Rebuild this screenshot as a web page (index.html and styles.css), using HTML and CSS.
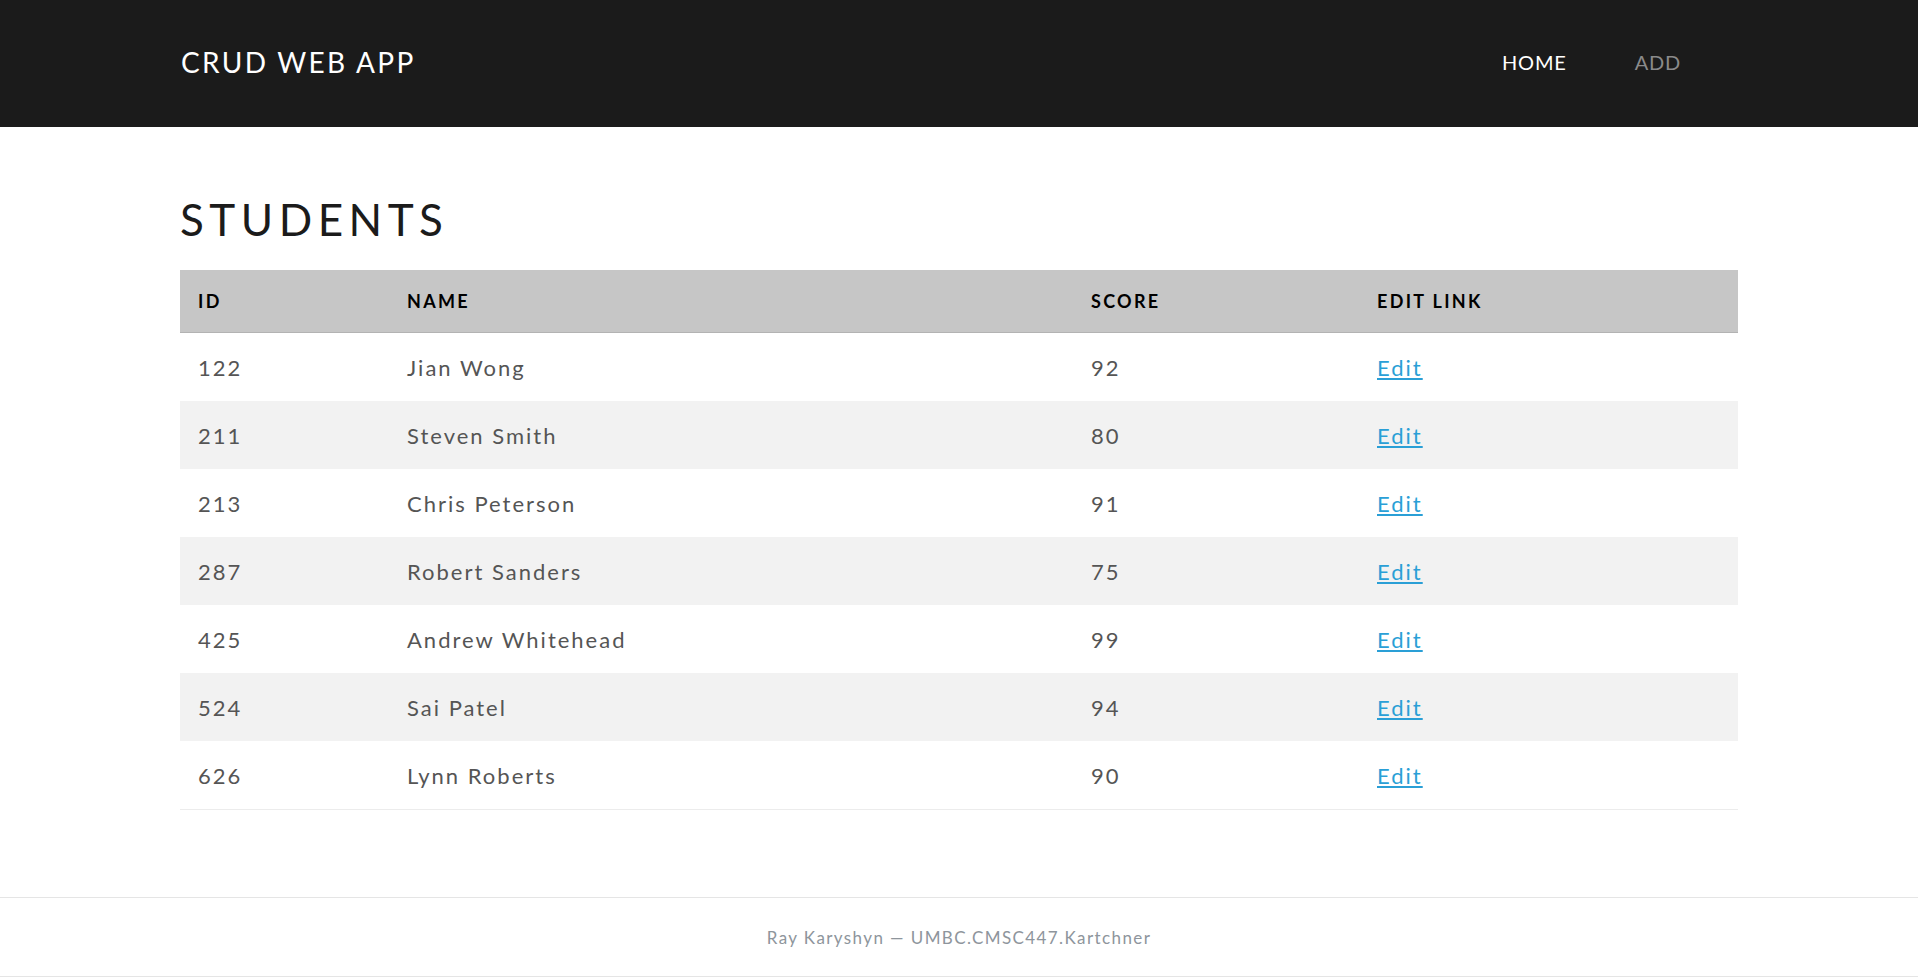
FILE: index.html
```html
<!DOCTYPE html>
<html lang="en">
<head>
<meta charset="utf-8">
<title>CRUD Web App</title>
<link rel="stylesheet" href="styles.css">
</head>
<body>
<header class="topbar">
  <div class="brand">CRUD WEB APP</div>
  <nav class="nav">
    <a class="nav-link active" href="#">HOME</a>
    <a class="nav-link" href="#">ADD</a>
  </nav>
</header>
<main class="main">
  <h1 class="page-title">STUDENTS</h1>
  <table class="students">
    <thead>
      <tr><th class="c-id">ID</th><th class="c-name">NAME</th><th class="c-score">SCORE</th><th class="c-edit">EDIT LINK</th></tr>
    </thead>
    <tbody>
      <tr><td>122</td><td>Jian Wong</td><td>92</td><td><a href="#">Edit</a></td></tr>
      <tr><td>211</td><td>Steven Smith</td><td>80</td><td><a href="#">Edit</a></td></tr>
      <tr><td>213</td><td>Chris Peterson</td><td>91</td><td><a href="#">Edit</a></td></tr>
      <tr><td>287</td><td>Robert Sanders</td><td>75</td><td><a href="#">Edit</a></td></tr>
      <tr><td>425</td><td>Andrew Whitehead</td><td>99</td><td><a href="#">Edit</a></td></tr>
      <tr><td>524</td><td>Sai Patel</td><td>94</td><td><a href="#">Edit</a></td></tr>
      <tr><td>626</td><td>Lynn Roberts</td><td>90</td><td><a href="#">Edit</a></td></tr>
    </tbody>
  </table>
</main>
<footer class="footer">Ray Karyshyn — UMBC.CMSC447.Kartchner</footer>
</body>
</html>
```

FILE: styles.css
```css
html, body { margin: 0; padding: 0; }
body {
  font-family: "Lato", "Noto Sans", sans-serif;
  background: #fff;
  color: #555;
}
.topbar {
  height: 124px;
  padding: 0 180px 3px 181px;
  background: #1b1b1b;
  display: flex;
  align-items: center;
  justify-content: space-between;
}
.brand {
  color: #fff;
  font-size: 28px;
  letter-spacing: 2.3px;
}
.nav {
  display: flex;
  gap: 68px;
  margin-right: 57px;
}
.nav-link {
  color: #8a8a8a;
  text-decoration: none;
  font-size: 20px;
  letter-spacing: 0.8px;
}
.nav-link.active { color: #fff; }
.main {
  padding: 66px 180px 87px;
}
.page-title {
  margin: 0 0 24px;
  font-size: 44px;
  line-height: 53px;
  font-weight: 400;
  letter-spacing: 5.5px;
  color: #1b1b1b;
}
.students {
  width: 100%;
  border-collapse: collapse;
  border-bottom: 1px solid #ececec;
}
.students th {
  background: #c6c6c6;
  color: #000;
  text-align: left;
  font-size: 18px;
  font-weight: 700;
  letter-spacing: 2.3px;
  height: 62px;
  padding: 0 18px;
  border-bottom: 1px solid #b3b3b3;
}
.c-id { width: 173px; }
.c-name { width: 648px; }
.c-score { width: 250px; }
.students td {
  height: 68px;
  padding: 0 18px;
  font-size: 22px;
  letter-spacing: 2px;
  color: #555;
}
.students tbody tr:nth-child(even) td { background: #f2f2f2; }
.students a { color: #2a9fd6; }
.footer {
  border-top: 1px solid #e5e5e5;
  border-bottom: 1px solid #e5e5e5;
  height: 78px;
  display: flex;
  align-items: center;
  justify-content: center;
  color: #8e959c;
  font-size: 17px;
  letter-spacing: 1.4px;
}
```
